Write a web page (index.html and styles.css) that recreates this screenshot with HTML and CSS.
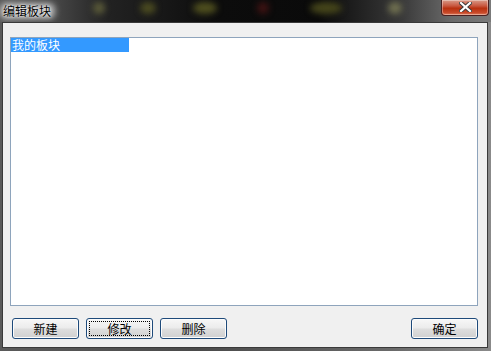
FILE: index.html
```html
<!DOCTYPE html>
<html lang="zh">
<head>
<meta charset="utf-8">
<title>编辑板块</title>
<link rel="stylesheet" href="styles.css">
</head>
<body>
<div class="window">
  <div class="titlebar">
    <span class="title">编辑板块</span>
    <span class="glow g1"></span>
    <span class="glow g2"></span>
    <span class="glow g3"></span>
    <span class="glow g4"></span>
    <span class="glow g5"></span>
    <span class="glow g6"></span>
    <button class="close" aria-label="关闭">
      <svg width="13" height="10" viewBox="0 0 13 10"><path d="M2 1 L11 9 M11 1 L2 9" stroke="#3a3a3a" stroke-width="4" stroke-linecap="square"/><path d="M2 1 L11 9 M11 1 L2 9" stroke="#fff" stroke-width="2.2" stroke-linecap="square"/></svg>
    </button>
  </div>
  <div class="frame">
    <div class="client">
      <div class="listbox">
        <div class="item selected">我的板块</div>
      </div>
      <div class="actions">
        <button class="btn">新建</button>
        <button class="btn focused">修改</button>
        <button class="btn">删除</button>
        <span class="spacer"></span>
        <button class="btn">确定</button>
      </div>
    </div>
  </div>
</div>
</body>
</html>
```
FILE: styles.css
```css
html, body {
  margin: 0;
  padding: 0;
}
body {
  width: 491px;
  height: 351px;
  overflow: hidden;
  font-family: "Noto Sans CJK SC", "DejaVu Sans", sans-serif;
  font-size: 12px;
}
.window {
  width: 491px;
  height: 351px;
  display: flex;
  flex-direction: column;
  background: linear-gradient(to right, #5a5a5a 0%, #4a4a4a 40%, #6a6a6a 80%, #8a8a8a 100%);
}
.titlebar {
  position: relative;
  height: 22px;
  flex: none;
  display: flex;
  align-items: flex-start;
  background: linear-gradient(to right, #5a5a5a 0%, #444 12%, #222 22%, #0c0c0c 45%, #0a0a0a 65%, #3a3a3a 82%, #6a6a6a 92%, #7a7a7a 100%);
  overflow: hidden;
}
.title {
  position: relative;
  z-index: 2;
  margin: 2px 0 0 3px;
  line-height: 17px;
  color: #000;
  text-shadow: 0 0 2px rgba(255,255,255,0.9), 0 0 4px rgba(255,255,255,0.7);
}
.title::before {
  content: "";
  position: absolute;
  z-index: -1;
  left: -3px;
  right: -4px;
  top: 1px;
  bottom: 0;
  background: rgba(200,200,200,0.85);
  border-radius: 6px;
  filter: blur(3px);
}
.glow {
  position: absolute;
  top: 2px;
  height: 12px;
  border-radius: 50%;
  filter: blur(3px);
}
.g1 { left: 93px; width: 12px; background: #5a5a38; }
.g2 { left: 140px; width: 16px; background: #4a4a20; }
.g3 { left: 193px; width: 24px; background: #4e4e1e; }
.g4 { left: 257px; width: 12px; background: #3e1212; }
.g5 { left: 310px; width: 32px; background: #45451a; }
.g6 { left: 388px; width: 14px; background: #707050; }
.close {
  position: relative;
  z-index: 2;
  margin-left: auto;
  margin-right: 2px;
  width: 48px;
  height: 16px;
  padding: 0;
  border: 1px solid #4a2020;
  border-top: none;
  border-radius: 0 0 4px 4px;
  background: linear-gradient(to bottom, #d89a88 0%, #c8563e 40%, #b8300f 55%, #c84a2a 85%, #e08060 100%);
  box-shadow: inset 0 0 0 1px rgba(255,255,255,0.35);
  display: flex;
  align-items: center;
  justify-content: center;
}
.close svg { display: block; margin-top: -2px; }
.frame {
  flex: 1;
  display: flex;
  padding: 0 3px 3px 2px;
}
.client {
  flex: 1;
  display: flex;
  flex-direction: column;
  background: #f0f0f0;
  border: 1px solid #3a3a3a;
  padding: 14px 9px 8px 7px;
}
.listbox {
  flex: 1;
  background: #fff;
  border: 1px solid #8ea4bc;
  padding: 0;
}
.item {
  width: 117px;
  height: 14px;
  line-height: 14px;
  padding-left: 1px;
  color: #000;
}
.item.selected {
  background: #3399ff;
  color: #fff;
}
.actions {
  display: flex;
  gap: 7px;
  margin-top: 12px;
  padding-left: 2px;
}
.spacer { flex: 1; }
.btn {
  width: 67px;
  height: 21px;
  padding: 0;
  font-family: inherit;
  font-size: 12px;
  line-height: 16px;
  color: #000;
  border: 1px solid #1e4a7a;
  border-radius: 3px;
  background: linear-gradient(to bottom, #f7f7f7 0%, #ececec 45%, #dddddd 55%, #d0d0d0 100%);
  box-shadow: inset 0 0 0 1px #fcfcfc;
}
.btn.focused {
  outline: 1px dotted #000;
  outline-offset: -4px;
}
```
